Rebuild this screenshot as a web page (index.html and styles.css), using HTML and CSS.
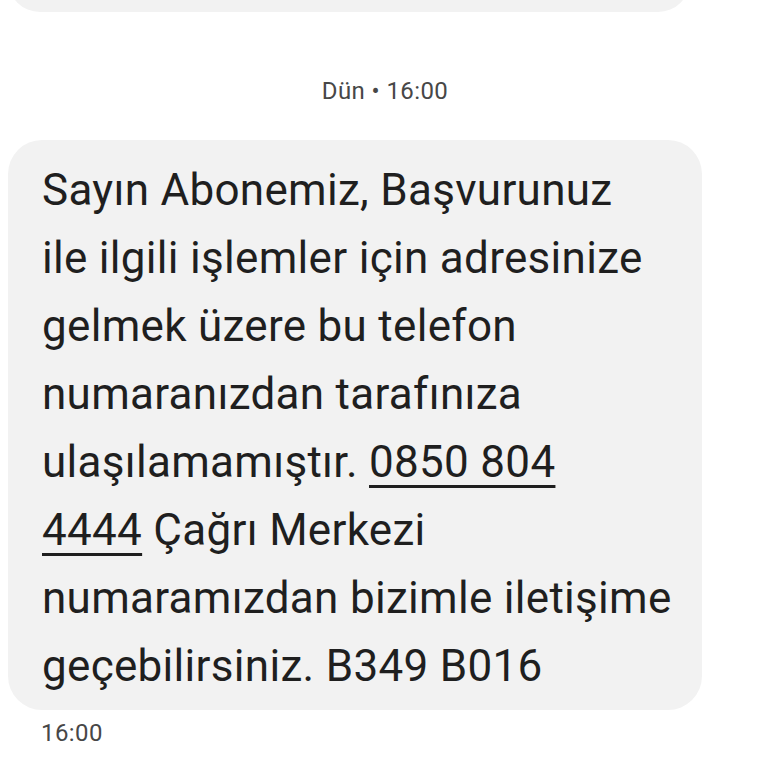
FILE: index.html
```html
<!DOCTYPE html>
<html lang="tr">
<head>
<meta charset="utf-8">
<link rel="stylesheet" href="styles.css">
</head>
<body>
<div class="thread">
  <div class="prev-clip"><div class="prev-bubble"></div></div>
  <div class="date">Dün • 16:00</div>
  <div class="msg">
    <div class="bubble">Sayın Abonemiz, Başvurunuz<br>ile ilgili işlemler için adresinize<br>gelmek üzere bu telefon<br>numaranızdan tarafınıza<br>ulaşılamamıştır. <span class="link">0850 804<br>4444</span> Çağrı Merkezi<br>numaramızdan bizimle iletişime<br>geçebilirsiniz. B349 B016</div>
    <div class="time">16:00</div>
  </div>
</div>
</body>
</html>
```

FILE: styles.css
```css
html, body {
  margin: 0;
  padding: 0;
  background: #ffffff;
}
body {
  font-family: Roboto, "Noto Sans", sans-serif;
  color: #1f1f1f;
  width: 768px;
  height: 768px;
  overflow: hidden;
}
.thread {
  display: flex;
  flex-direction: column;
}
.prev-clip {
  height: 12px;
  overflow: hidden;
  display: flex;
  align-items: flex-end;
  padding-left: 8px;
}
.prev-bubble {
  flex: none;
  width: 682px;
  height: 80px;
  background: #f2f2f2;
  border-radius: 32px;
}
.date {
  text-align: center;
  font-size: 24px;
  line-height: 28px;
  letter-spacing: 0.4px;
  color: #474747;
  margin-top: 65px;
  padding-left: 2px;
}
.msg {
  display: flex;
  flex-direction: column;
  align-items: flex-start;
  padding-left: 8px;
  margin-top: 35px;
}
.bubble {
  width: 694px;
  box-sizing: border-box;
  background: #f2f2f2;
  border-radius: 34px;
  padding: 16px 30px 10px 34px;
  font-size: 44px;
  line-height: 68px;
  letter-spacing: 0.3px;
  white-space: nowrap;
  color: #1f1f1f;
}
.link {
  text-decoration: underline;
  text-decoration-thickness: 3px;
  text-underline-offset: 8px;
}
.time {
  margin-top: 9px;
  padding-left: 33px;
  font-size: 24px;
  line-height: 28px;
  letter-spacing: 0.4px;
  color: #474747;
}
```
